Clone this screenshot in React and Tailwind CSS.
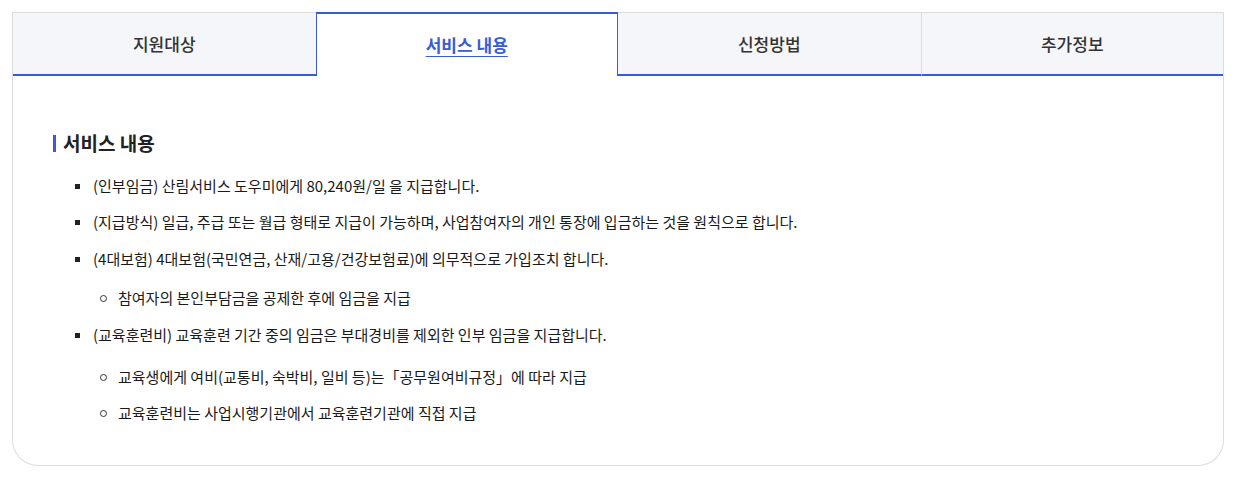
export default function App() {
  const font = { fontFamily: '"Noto Sans CJK KR", "Noto Sans", sans-serif' };
  const Sq = () => <span className="absolute left-[-18px] top-[10px] w-[5px] h-[5px] bg-[#222]" />;
  const Ci = () => <span className="absolute left-[-18px] top-[9px] w-[7px] h-[7px] rounded-full border border-[#333]" />;
  return (
    <div className="bg-white p-3 w-[1237px] h-[479px]" style={font}>
      <div className="w-[1212px] h-[454px] border-x border-b border-[#dcdcdc] rounded-b-[26px]">
        <div className="grid grid-cols-4">
          <div className="h-[64px] border-t border-[#dcdcdc] border-b-2 border-b-[#3a5bd6] bg-[#f5f6fa] flex items-center justify-center text-[17px] font-medium text-[#333]">
            지원대상
          </div>
          <div className="h-[64px] border-t-2 border-x border-[#3a5bd6] bg-white flex items-center justify-center text-[17px] font-bold text-[#3a5bd6] underline underline-offset-[4px]">
            서비스 내용
          </div>
          <div className="h-[64px] border-t border-[#dcdcdc] border-b-2 border-b-[#3a5bd6] bg-[#f5f6fa] flex items-center justify-center text-[17px] font-medium text-[#333]">
            신청방법
          </div>
          <div className="h-[64px] border-t border-l border-[#dcdcdc] border-b-2 border-b-[#3a5bd6] bg-[#f5f6fa] flex items-center justify-center text-[17px] font-medium text-[#333]">
            추가정보
          </div>
        </div>
        <div className="pl-[40px] pt-[54px]">
          <div className="flex items-center gap-[7px] h-[26px]">
            <span className="w-[3px] h-[17px] bg-[#3a5bd6]" />
            <h2 className="text-[19px] font-bold text-[#222] leading-[26px]">서비스 내용</h2>
          </div>
          <ul className="mt-[18px] pl-[40px] text-[15px] text-[#1a1a1a] leading-[24px]">
            <li className="relative"><Sq />(인부임금) 산림서비스 도우미에게 80,240원/일 을 지급합니다.</li>
            <li className="relative mt-[12px]"><Sq />(지급방식) 일급, 주급 또는 월급 형태로 지급이 가능하며, 사업참여자의 개인 통장에 입금하는 것을 원칙으로 합니다.</li>
            <li className="relative mt-[13px]"><Sq />(4대보험) 4대보험(국민연금, 산재/고용/건강보험료)에 의무적으로 가입조치 합니다.
              <ul className="pl-[25px] mt-[15px]">
                <li className="relative"><Ci />참여자의 본인부담금을 공제한 후에 임금을 지급</li>
              </ul>
            </li>
            <li className="relative mt-[13px]"><Sq />(교육훈련비) 교육훈련 기간 중의 임금은 부대경비를 제외한 인부 임금을 지급합니다.
              <ul className="pl-[25px] mt-[18px]">
                <li className="relative"><Ci />교육생에게 여비(교통비, 숙박비, 일비 등)는「공무원여비규정」에 따라 지급</li>
                <li className="relative mt-[12px]"><Ci />교육훈련비는 사업시행기관에서 교육훈련기관에 직접 지급</li>
              </ul>
            </li>
          </ul>
        </div>
      </div>
    </div>
  );
}
